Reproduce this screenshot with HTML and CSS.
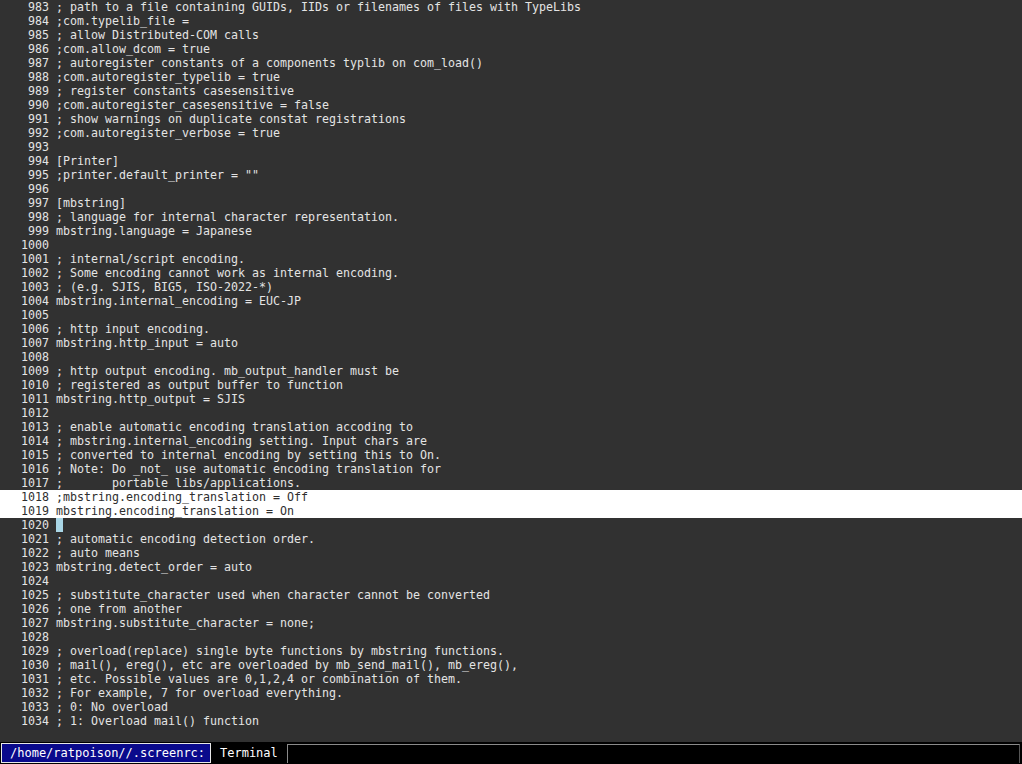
FILE: index.html
```html
<!DOCTYPE html>
<html>
<head>
<meta charset="utf-8">
<link rel="stylesheet" href="styles.css">
</head>
<body>
<div class="screen">
  <div class="editor">
    <div class="ln"><span class="no">983</span><span class="tx">; path to a file containing GUIDs, IIDs or filenames of files with TypeLibs</span></div>
    <div class="ln"><span class="no">984</span><span class="tx">;com.typelib_file =</span></div>
    <div class="ln"><span class="no">985</span><span class="tx">; allow Distributed-COM calls</span></div>
    <div class="ln"><span class="no">986</span><span class="tx">;com.allow_dcom = true</span></div>
    <div class="ln"><span class="no">987</span><span class="tx">; autoregister constants of a components typlib on com_load()</span></div>
    <div class="ln"><span class="no">988</span><span class="tx">;com.autoregister_typelib = true</span></div>
    <div class="ln"><span class="no">989</span><span class="tx">; register constants casesensitive</span></div>
    <div class="ln"><span class="no">990</span><span class="tx">;com.autoregister_casesensitive = false</span></div>
    <div class="ln"><span class="no">991</span><span class="tx">; show warnings on duplicate constat registrations</span></div>
    <div class="ln"><span class="no">992</span><span class="tx">;com.autoregister_verbose = true</span></div>
    <div class="ln"><span class="no">993</span><span class="tx"></span></div>
    <div class="ln"><span class="no">994</span><span class="tx">[Printer]</span></div>
    <div class="ln"><span class="no">995</span><span class="tx">;printer.default_printer = ""</span></div>
    <div class="ln"><span class="no">996</span><span class="tx"></span></div>
    <div class="ln"><span class="no">997</span><span class="tx">[mbstring]</span></div>
    <div class="ln"><span class="no">998</span><span class="tx">; language for internal character representation.</span></div>
    <div class="ln"><span class="no">999</span><span class="tx">mbstring.language = Japanese</span></div>
    <div class="ln"><span class="no">1000</span><span class="tx"></span></div>
    <div class="ln"><span class="no">1001</span><span class="tx">; internal/script encoding.</span></div>
    <div class="ln"><span class="no">1002</span><span class="tx">; Some encoding cannot work as internal encoding.</span></div>
    <div class="ln"><span class="no">1003</span><span class="tx">; (e.g. SJIS, BIG5, ISO-2022-*)</span></div>
    <div class="ln"><span class="no">1004</span><span class="tx">mbstring.internal_encoding = EUC-JP</span></div>
    <div class="ln"><span class="no">1005</span><span class="tx"></span></div>
    <div class="ln"><span class="no">1006</span><span class="tx">; http input encoding.</span></div>
    <div class="ln"><span class="no">1007</span><span class="tx">mbstring.http_input = auto</span></div>
    <div class="ln"><span class="no">1008</span><span class="tx"></span></div>
    <div class="ln"><span class="no">1009</span><span class="tx">; http output encoding. mb_output_handler must be</span></div>
    <div class="ln"><span class="no">1010</span><span class="tx">; registered as output buffer to function</span></div>
    <div class="ln"><span class="no">1011</span><span class="tx">mbstring.http_output = SJIS</span></div>
    <div class="ln"><span class="no">1012</span><span class="tx"></span></div>
    <div class="ln"><span class="no">1013</span><span class="tx">; enable automatic encoding translation accoding to</span></div>
    <div class="ln"><span class="no">1014</span><span class="tx">; mbstring.internal_encoding setting. Input chars are</span></div>
    <div class="ln"><span class="no">1015</span><span class="tx">; converted to internal encoding by setting this to On.</span></div>
    <div class="ln"><span class="no">1016</span><span class="tx">; Note: Do _not_ use automatic encoding translation for</span></div>
    <div class="ln"><span class="no">1017</span><span class="tx">;       portable libs/applications.</span></div>
    <div class="ln sel"><span class="no">1018</span><span class="tx">;mbstring.encoding_translation = Off</span></div>
    <div class="ln sel"><span class="no">1019</span><span class="tx">mbstring.encoding_translation = On</span></div>
    <div class="ln"><span class="no">1020</span><span class="tx"><span class="cursor"> </span></span></div>
    <div class="ln"><span class="no">1021</span><span class="tx">; automatic encoding detection order.</span></div>
    <div class="ln"><span class="no">1022</span><span class="tx">; auto means</span></div>
    <div class="ln"><span class="no">1023</span><span class="tx">mbstring.detect_order = auto</span></div>
    <div class="ln"><span class="no">1024</span><span class="tx"></span></div>
    <div class="ln"><span class="no">1025</span><span class="tx">; substitute_character used when character cannot be converted</span></div>
    <div class="ln"><span class="no">1026</span><span class="tx">; one from another</span></div>
    <div class="ln"><span class="no">1027</span><span class="tx">mbstring.substitute_character = none;</span></div>
    <div class="ln"><span class="no">1028</span><span class="tx"></span></div>
    <div class="ln"><span class="no">1029</span><span class="tx">; overload(replace) single byte functions by mbstring functions.</span></div>
    <div class="ln"><span class="no">1030</span><span class="tx">; mail(), ereg(), etc are overloaded by mb_send_mail(), mb_ereg(),</span></div>
    <div class="ln"><span class="no">1031</span><span class="tx">; etc. Possible values are 0,1,2,4 or combination of them.</span></div>
    <div class="ln"><span class="no">1032</span><span class="tx">; For example, 7 for overload everything.</span></div>
    <div class="ln"><span class="no">1033</span><span class="tx">; 0: No overload</span></div>
    <div class="ln"><span class="no">1034</span><span class="tx">; 1: Overload mail() function</span></div>
  </div>
  <div class="bar">
    <div class="prompt">/home/ratpoison//.screenrc:</div>
    <div class="tab">Terminal</div>
    <div class="input"></div>
  </div>
</div>
</body>
</html>
```

FILE: styles.css
```css
html, body {
  margin: 0;
  padding: 0;
  background: #000;
}
.screen {
  width: 1022px;
  height: 764px;
  display: flex;
  flex-direction: column;
  font-family: "DejaVu Sans Mono", "Liberation Mono", monospace;
  font-size: 11.63px;
  overflow: hidden;
}
.editor {
  height: 742px;
  background: #313131;
  color: #e4e4e4;
  flex: none;
}
.ln {
  display: flex;
  height: 14px;
  line-height: 14px;
  white-space: pre;
}
.ln.sel {
  background: #ffffff;
  color: #2e2e2e;
}
.no {
  width: 49px;
  text-align: right;
  margin-right: 7px;
  flex: none;
}
.tx {
  flex: 1;
}
.cursor {
  display: inline-block;
  width: 7px;
  height: 14px;
  vertical-align: top;
  background: #a9d6e6;
}
.bar {
  flex: 1;
  display: flex;
  align-items: stretch;
  background: #000;
  padding: 1px 0 1px 1px;
  gap: 0;
}
.prompt {
  width: 200px;
  background: #0a0a8c;
  color: #fff;
  border: 1px solid #e8e8e8;
  padding-left: 8px;
  line-height: 18px;
  font-size: 12px;
  white-space: pre;
}
.tab {
  color: #fff;
  padding: 0 9px 0 9px;
  width: 58px;
  line-height: 20px;
  font-size: 12px;
}
.input {
  flex: 1;
  border-top: 1px solid #8a8a8a;
  border-left: 1px solid #8a8a8a;
  border-right: 1px solid #555;
  margin: 1px 2px 0 0;
  background: #000;
}
```
